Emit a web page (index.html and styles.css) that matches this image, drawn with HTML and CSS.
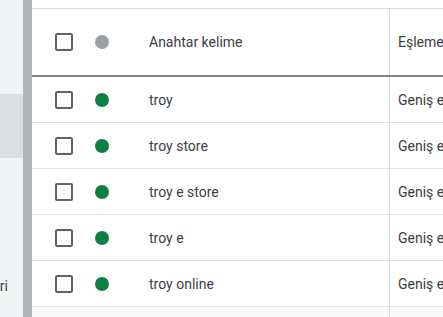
FILE: index.html
```html
<!DOCTYPE html>
<html lang="tr">
<head>
<meta charset="utf-8">
<link rel="stylesheet" href="styles.css">
</head>
<body>
<div class="app">
  <aside class="sidebar">
    <div class="side-gap"></div>
    <div class="side-item selected"></div>
    <div class="side-spacer"></div>
    <div class="side-label"><span>Anahtar kelimeleri</span></div>
  </aside>
  <div class="rail"></div>
  <main class="main">
    <div class="table">
      <div class="row head">
        <div class="c-check"><span class="box"></span></div>
        <div class="c-dot"><span class="dot grey"></span></div>
        <div class="c-kw">Anahtar kelime</div>
        <div class="c-match">Eşleme türü</div>
      </div>
      <div class="row">
        <div class="c-check"><span class="box"></span></div>
        <div class="c-dot"><span class="dot green"></span></div>
        <div class="c-kw">troy</div>
        <div class="c-match">Geniş eşleme</div>
      </div>
      <div class="row">
        <div class="c-check"><span class="box"></span></div>
        <div class="c-dot"><span class="dot green"></span></div>
        <div class="c-kw">troy store</div>
        <div class="c-match">Geniş eşleme</div>
      </div>
      <div class="row">
        <div class="c-check"><span class="box"></span></div>
        <div class="c-dot"><span class="dot green"></span></div>
        <div class="c-kw">troy e store</div>
        <div class="c-match">Geniş eşleme</div>
      </div>
      <div class="row">
        <div class="c-check"><span class="box"></span></div>
        <div class="c-dot"><span class="dot green"></span></div>
        <div class="c-kw">troy e</div>
        <div class="c-match">Geniş eşleme</div>
      </div>
      <div class="row">
        <div class="c-check"><span class="box"></span></div>
        <div class="c-dot"><span class="dot green"></span></div>
        <div class="c-kw">troy online</div>
        <div class="c-match">Geniş eşleme</div>
      </div>
      <div class="row foot">
        <div class="c-check"></div>
        <div class="c-dot"></div>
        <div class="c-kw"></div>
        <div class="c-match"></div>
      </div>
    </div>
  </main>
</div>
</body>
</html>
```

FILE: styles.css
```css
* { box-sizing: border-box; }
html, body { margin: 0; padding: 0; }
body {
  width: 443px;
  height: 317px;
  overflow: hidden;
  background: #fff;
  font-family: Roboto, "Liberation Sans", sans-serif;
  font-size: 14px;
  color: #3c4043;
}
.app {
  display: flex;
  height: 317px;
}
.sidebar {
  width: 23px;
  flex: none;
  background: #f1f3f4;
  display: flex;
  flex-direction: column;
  overflow: hidden;
}
.side-gap { height: 94px; flex: none; }
.side-item { height: 64px; flex: none; }
.side-item.selected { background: #dcdde0; }
.side-spacer { height: 120px; flex: none; }
.side-label {
  display: flex;
  justify-content: flex-end;
  padding-right: 15px;
  white-space: nowrap;
  font-size: 14px;
  color: #3c4043;
  line-height: 16px;
}
.rail {
  width: 9px;
  flex: none;
  background: #b4b5b7;
}
.main {
  flex: 1;
  min-width: 0;
  padding-top: 8px;
  overflow: hidden;
}
.table {
  border-top: 1px solid #dadce0;
  width: 480px;
}
.row {
  display: flex;
  align-items: stretch;
  height: 46px;
  border-bottom: 1px solid #e0e0e0;
}
.row.head {
  height: 68px;
  border-bottom: 2px solid #80868b;
}
.row.foot { background: #f8f9fa; border-bottom: none; }
.c-check {
  width: 50px;
  flex: none;
  display: flex;
  align-items: center;
  padding-left: 23px;
}
.c-dot {
  width: 67px;
  flex: none;
  display: flex;
  align-items: center;
  padding-left: 13px;
}
.c-kw {
  width: 241px;
  flex: none;
  display: flex;
  align-items: center;
  border-right: 1px solid #dadce0;
}
.c-match {
  flex: 1;
  display: flex;
  align-items: center;
  padding-left: 8px;
  white-space: nowrap;
}
.box {
  width: 18px;
  height: 18px;
  border: 2px solid #5f6368;
  border-radius: 2px;
}
.dot {
  width: 14px;
  height: 14px;
  border-radius: 50%;
}
.dot.grey { background: #9aa0a6; }
.dot.green { background: #0b8043; }
```
